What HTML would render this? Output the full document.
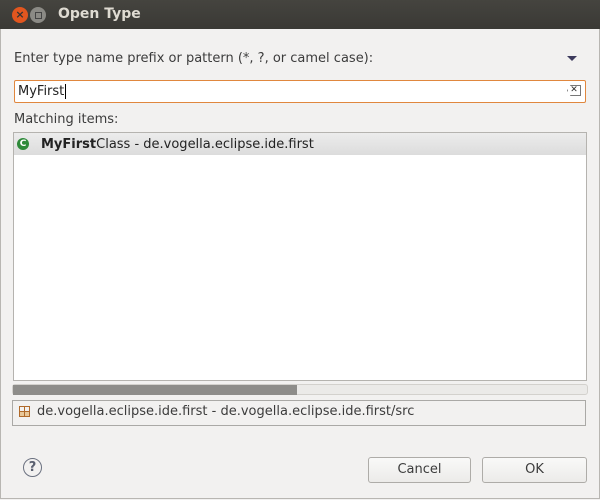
<!DOCTYPE html><html><head><style>
body{margin:0;width:600px;height:500px;background:#f2f1f0;font-family:"DejaVu Sans","Liberation Sans",sans-serif;font-size:13px;color:#3c3c3c;position:relative;overflow:hidden}
.a{position:absolute;white-space:nowrap}
</style></head><body>
<div class="a" style="left:0;top:0;width:600px;height:29px;background:linear-gradient(#45443f,#3a3935);"></div>
<div class="a" style="left:12px;top:7px;width:16px;height:16px;border-radius:50%;background:#e2561f;color:#333;font-size:11px;text-align:center;line-height:16px;font-weight:bold">×</div>
<div class="a" style="left:30px;top:7px;width:16px;height:16px;border-radius:50%;background:#8b8a85;"><div class="a" style="left:5px;top:5px;width:5px;height:5px;border:1px solid #444"></div></div>
<div class="a" style="left:58px;top:6px;color:#dfdbd2;font-weight:bold;font-size:14px">Open Type</div>
<div class="a" style="left:0;top:29px;width:598px;height:469px;border:1px solid #b8b6b2;border-top:none"></div>
<div class="a" style="left:14px;top:51px">Enter type name prefix or pattern (*, ?, or camel case):</div>
<div class="a" style="left:567px;top:56px;width:0;height:0;border-left:5px solid transparent;border-right:5px solid transparent;border-top:5px solid #3c3a5c"></div>
<div class="a" style="left:14px;top:80px;width:570px;height:21px;background:#fff;border:1px solid #e0873e;border-radius:2px"></div>
<div class="a" style="left:18px;top:84px;color:#222">MyFirst<span style="border-left:1px solid #000;margin-left:1px"></span></div>
<div class="a" style="left:567px;top:85px;width:12px;height:9px;border:1px solid #777;font-size:9px;line-height:9px;text-align:center;color:#333;clip-path:polygon(25% 0,100% 0,100% 100%,25% 100%,0 50%)">✕</div>
<div class="a" style="left:14px;top:112px">Matching items:</div>
<div class="a" style="left:13px;top:132px;width:572px;height:247px;background:#fff;border:1px solid #b5b3af"></div>
<div class="a" style="left:14px;top:133px;width:572px;height:22px;background:linear-gradient(#ececec,#dcdcdc)"></div>
<div class="a" style="left:17px;top:138px;width:12px;height:12px;border-radius:50%;background:#2f8a3a;color:#fff;font-size:9px;font-weight:bold;text-align:center;line-height:12px">C</div>
<div class="a" style="left:41px;top:137px;color:#222"><b>MyFirst</b>Class - de.vogella.eclipse.ide.first</div>
<div class="a" style="left:12px;top:384px;width:574px;height:9px;background:#ebeae8;border:1px solid #d3d1cd;border-radius:3px"></div>
<div class="a" style="left:13px;top:385px;width:284px;height:10px;background:#8e8d8a"></div>
<div class="a" style="left:12px;top:400px;width:572px;height:24px;border:1px solid #aaa9a6"></div>
<div class="a" style="left:19px;top:406px;width:9px;height:9px;border:1px solid #b06a2a;background:linear-gradient(90deg,transparent 4px,#b06a2a 4px,#b06a2a 5px,transparent 5px),linear-gradient(transparent 4px,#b06a2a 4px,#b06a2a 5px,#e8c89a 5px)"></div>
<div class="a" style="left:37px;top:404px">de.vogella.eclipse.ide.first - de.vogella.eclipse.ide.first/src</div>
<div class="a" style="left:23px;top:458px;width:17px;height:17px;border:1.5px solid #6b7180;border-radius:50%;text-align:center;font-weight:bold;color:#5a6070;line-height:17px;font-size:13px">?</div>
<div class="a" style="left:368px;top:457px;width:101px;height:24px;border:1px solid #aeaca8;border-radius:3px;background:linear-gradient(#f9f9f8,#ecebe9);text-align:center;line-height:24px">Cancel</div>
<div class="a" style="left:482px;top:457px;width:103px;height:24px;border:1px solid #aeaca8;border-radius:3px;background:linear-gradient(#f9f9f8,#ecebe9);text-align:center;line-height:24px">OK</div>
</body></html>
